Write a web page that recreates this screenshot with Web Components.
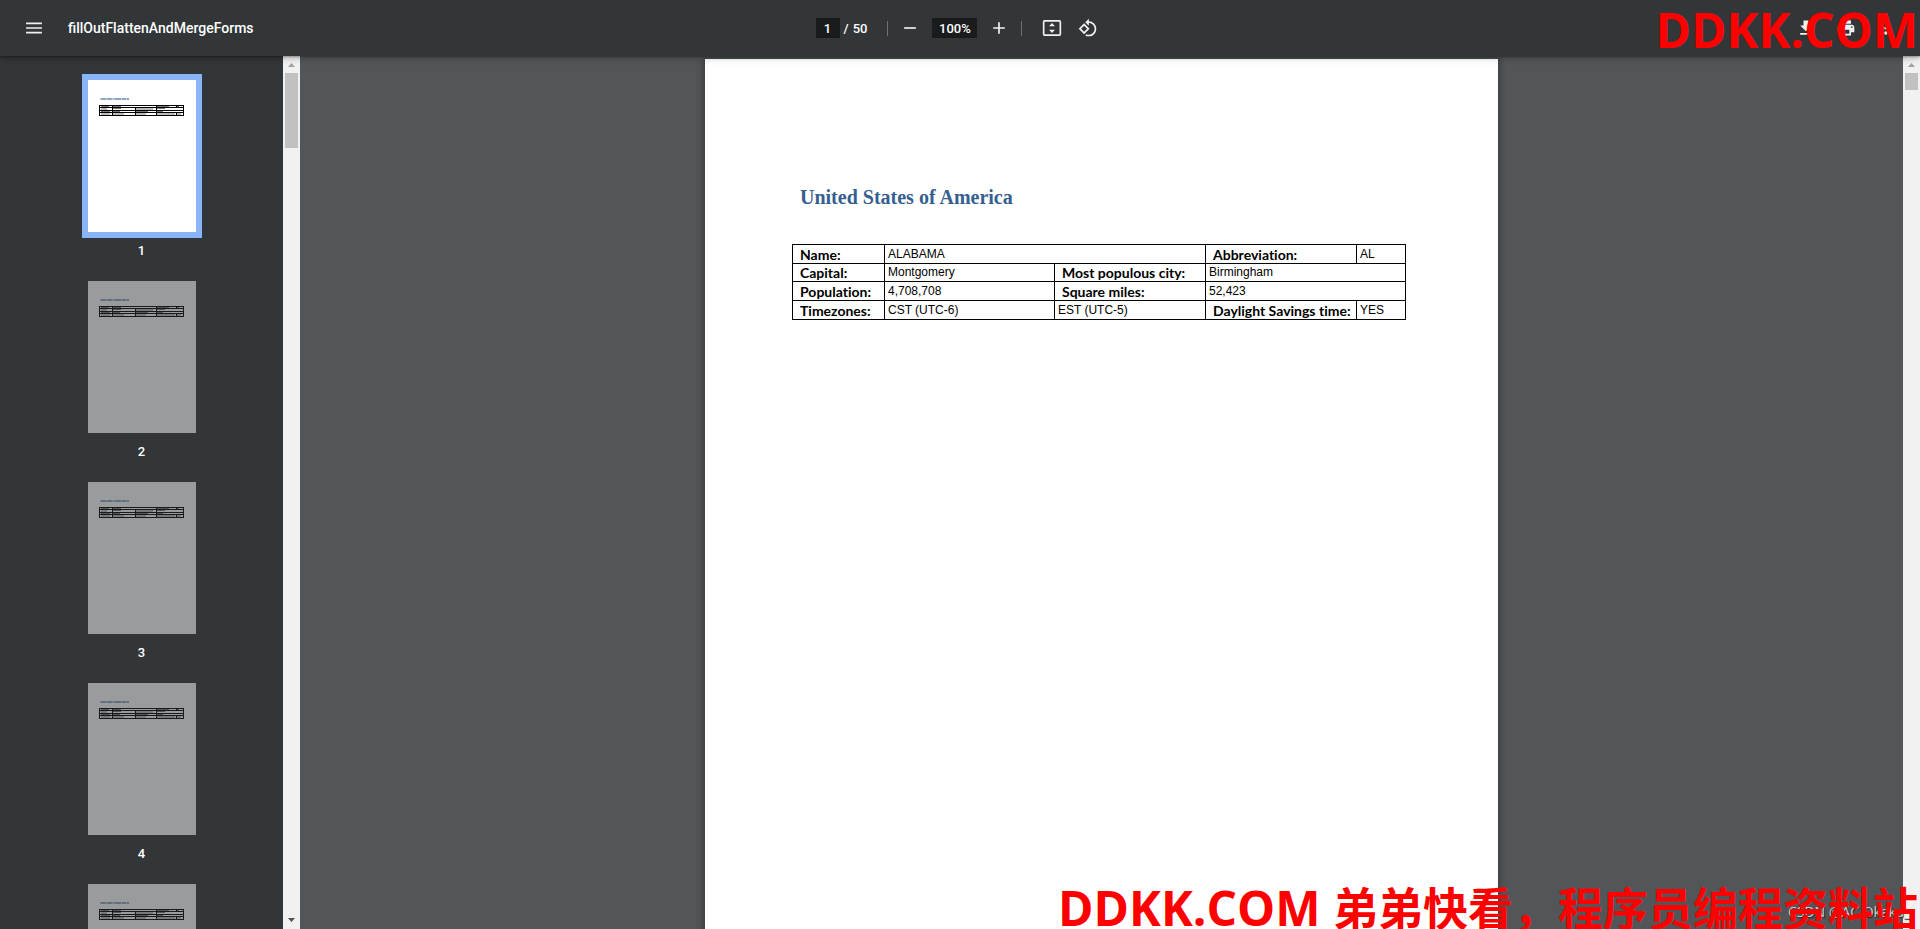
<!DOCTYPE html>
<html lang="en">
<head>
<meta charset="utf-8">
<title>fillOutFlattenAndMergeForms</title>
<style>
  html, body {
    margin: 0;
    height: 100%;
  }
  body {
    overflow: hidden;
    font-family: Roboto, "Liberation Sans", sans-serif;
  }
</style>
</head>
<body>
<pdf-viewer></pdf-viewer>

<script>
class IconButton extends HTMLElement {
  static get icons() {
    return {
      menu: `<path d="M2.500 18.500h19v-2h-19zm0-5.500h19v-2h-19zm0-7.500v2h19v-2z"/>`,
      remove: `<path d="M19 13H5v-2h14v2z"/>`,
      add: `<path d="M19 13h-6v6h-2v-6H5v-2h6V5h2v6h6v2z"/>`,
      fit: `<path fill-rule="evenodd" d="M3 2.500h18a2 2 0 0 1 2 2v15a2 2 0 0 1-2 2H3a2 2 0 0 1-2-2v-15a2 2 0 0 1 2-2zm0 2v15h18v-15H3zM12 6l3.500 4h-7zM12 18l3.500-4h-7z"/>`,
      rotate: `<path d="M7.340 6.410L.86 12.900l6.490 6.480 6.490-6.480-6.500-6.490zM3.690 12.900l3.660-3.660L11 12.900l-3.660 3.660-3.650-3.660zm15.670-6.260A8.950 8.950 0 0 0 13 4V.76L8.760 5 13 9.240V6c1.790 0 3.580.68 4.950 2.050a7.007 7.007 0 0 1 0 9.900 6.973 6.973 0 0 1-7.790 1.440l-1.490 1.490C10.020 21.620 11.510 22 13 22c2.300 0 4.610-.88 6.360-2.640a8.980 8.980 0 0 0 0-12.720z"/>`,
      download: `<path d="M19 9h-4V3H9v6H5l7 7 7-7zM5 18v2h14v-2H5z"/>`,
      print: `<path d="M19 8H5c-1.660 0-3 1.340-3 3v6h4v4h12v-4h4v-6c0-1.660-1.340-3-3-3zm-3 11H8v-5h8v5zm3-7c-.55 0-1-.45-1-1s.45-1 1-1 1 .45 1 1-.45 1-1 1zm-1-9H6v4h12V3z"/>`,
      more: `<path d="M12 8c1.100 0 2-.9 2-2s-.9-2-2-2-2 .9-2 2 .9 2 2 2zm0 2c-1.100 0-2 .9-2 2s.9 2 2 2 2-.9 2-2-.9-2-2-2zm0 6c-1.100 0-2 .9-2 2s.9 2 2 2 2-.9 2-2-.9-2-2-2z"/>`
    };
  }
  constructor() {
    super();
    this.attachShadow({mode: "open"});
  }
  connectedCallback() {
    this.shadowRoot.innerHTML = `
    <style>
      :host {
        display: block;
      }
      button {
        display: flex;
        align-items: center;
        justify-content: center;
        width: 32px;
        height: 32px;
        padding: 0;
        border: 0;
        border-radius: 50%;
        background: none;
      }
      svg {
        width: 20px;
        height: 20px;
        fill: #f1f1f1;
      }
    </style>
    <button type="button" aria-label="${this.getAttribute("label")}">
      <svg viewBox="0 0 24 24">${IconButton.icons[this.getAttribute("icon")]}</svg>
    </button>
    `;
  }
}

class ViewerToolbar extends HTMLElement {
  constructor() {
    super();
    this.attachShadow({mode: "open"});
  }
  connectedCallback() {
    this.shadowRoot.innerHTML = `
    <style>
      :host {
        display: grid;
        grid-template-columns: 1fr auto 1fr;
        align-items: center;
        box-sizing: border-box;
        height: 56px;
        padding: 0 18px;
        background: #323639;
        color: #fff;
        font-size: 13px;
        font-weight: 500;
        box-shadow: 0 -2px 8px rgba(0, 0, 0, .09), 0 4px 8px rgba(0, 0, 0, .06), 0 1px 2px rgba(0, 0, 0, .3), 0 2px 6px rgba(0, 0, 0, .15);
      }
      div {
        display: flex;
        align-items: center;
      }
      .start {
        gap: 18px;
      }
      .title {
        font-size: 14px;
        line-height: 20px;
      }
      .center, .zoom {
        gap: 6px;
      }
      .pages, .view {
        gap: 4px;
      }
      .end {
        justify-content: flex-end;
        gap: 8px;
      }
      input {
        box-sizing: border-box;
        width: 24px;
        height: 20px;
        padding: 0;
        border: 0;
        background: #191b1c;
        color: #fff;
        font: inherit;
        text-align: center;
      }
      .zoom input {
        width: 45px;
      }
      .line {
        width: 1px;
        height: 15px;
        background: #6f7274;
      }
      .pages {
        margin-right: 14px;
      }
      .view {
        margin-left: 8px;
      }
    </style>
    <div class="start">
      <icon-button icon="menu" label="Menu"></icon-button>
      <span class="title">fillOutFlattenAndMergeForms</span>
    </div>
    <div class="center">
      <div class="pages">
        <input type="text" value="1" aria-label="Page number">
        <span>/</span>
        <span>50</span>
      </div>
      <span class="line"></span>
      <div class="zoom">
        <icon-button icon="remove" label="Zoom out"></icon-button>
        <input type="text" value="100%" aria-label="Zoom level">
        <icon-button icon="add" label="Zoom in"></icon-button>
      </div>
      <span class="line"></span>
      <div class="view">
        <icon-button icon="fit" label="Fit to page"></icon-button>
        <icon-button icon="rotate" label="Rotate counterclockwise"></icon-button>
      </div>
    </div>
    <div class="end">
      <icon-button icon="download" label="Download"></icon-button>
      <icon-button icon="print" label="Print"></icon-button>
      <icon-button icon="more" label="More actions"></icon-button>
    </div>
    `;
  }
}

class ScrollTrack extends HTMLElement {
  constructor() {
    super();
    this.attachShadow({mode: "open"});
  }
  connectedCallback() {
    this.shadowRoot.innerHTML = `
    <style>
      :host {
        display: flex;
        flex-direction: column;
        flex: none;
        width: 17px;
        background: #f1f1f1;
      }
      svg {
        display: block;
        width: 17px;
        height: 17px;
      }
      .handle {
        height: var(--handle);
        margin: 0 2px;
        background: #c1c1c1;
      }
      .down {
        margin-top: auto;
      }
    </style>
    <svg viewBox="0 0 17 17"><path d="M5 11l3.500-4 3.500 4z" fill="#a3a3a3"/></svg>
    <div class="handle"></div>
    <svg class="down" viewBox="0 0 17 17"><path d="M5 6l3.500 4L12 6z" fill="#505050"/></svg>
    `;
  }
}

class PageThumb extends HTMLElement {
  constructor() {
    super();
    this.attachShadow({mode: "open"});
  }
  connectedCallback() {
    this.shadowRoot.innerHTML = `
    <style>
      :host {
        display: flex;
        flex-direction: column;
        align-items: center;
        flex: none;
        height: 201px;
        color: #fff;
        font-size: 13px;
        font-weight: 500;
        line-height: 16px;
      }
      .sheet {
        margin-bottom: 11px;
        background: #fff;
        opacity: .5;
      }
      :host([active]) .sheet {
        opacity: 1;
        box-shadow: 0 0 0 6px #8ab4f8;
      }
      svg {
        display: block;
        width: 108px;
        height: 152px;
      }
    </style>
    <div class="sheet">
      <svg viewBox="0 0 108 152">
        <path d="M12.500 19h29" stroke="#8ea6c4" stroke-width="2" stroke-dasharray="6 .5 5 .5 2 .5"/>
        <path d="M13 26.500h8M25 26.500h8M69 26.500h12M89 26.500h2M13 29h6M25 28.500h8M48 29h17M69 28.500h8M13 31.500h9M25 31.500h7M48 31.500h12M69 31.500h6M13 34h9M25 34h11M48 34h10M69 34h18M89 34h4" stroke="#777" stroke-width="1"/>
        <path d="M11 25.500h85M11 27.500h85M11 30.500h85M11 32.500h85M11 35.500h85M11.500 25v11M24.500 25v11M47.500 27v9M68.500 25v11M88.500 25v3M88.500 32v4M95.500 25v11" stroke="#000" stroke-width="1"/>
      </svg>
    </div>
    <slot></slot>
    `;
  }
}

class StateForm extends HTMLElement {
  constructor() {
    super();
    this.attachShadow({mode: "open"});
  }
  connectedCallback() {
    this.shadowRoot.innerHTML = `
    <style>
      :host {
        display: block;
        box-sizing: border-box;
        width: 793px;
        min-height: 1123px;
        padding: 126px 87px;
        background: #fff;
        box-shadow: 0 2px 6px 2px rgba(0, 0, 0, .3);
      }
      h1 {
        margin: 0 0 35px 8px;
        color: #365f91;
        font: bold 20px/24px "Liberation Serif", serif;
      }
      table {
        width: 614px;
        border-collapse: collapse;
        table-layout: fixed;
        color: #000;
      }
      th, td {
        height: 18px;
        padding: 0;
        border: 1px solid #000;
        line-height: 17px;
        text-align: left;
        white-space: nowrap;
      }
      tr:nth-child(2) > * {
        height: 17px;
      }
      th {
        padding-left: 7px;
        font-family: Lato, sans-serif;
        font-size: 14px;
        font-weight: bold;
        font-variant-ligatures: none;
      }
      td {
        padding-left: 3px;
        font-family: "Liberation Sans", sans-serif;
        font-size: 12px;
      }
    </style>
    <h1>United States of America</h1>
    <table>
      <colgroup>
        <col style="width: 92px">
        <col style="width: 170px">
        <col style="width: 151px">
        <col style="width: 151px">
        <col style="width: 49px">
      </colgroup>
      <tr><th>Name:</th><td colspan="2">ALABAMA</td><th>Abbreviation:</th><td>AL</td></tr>
      <tr><th>Capital:</th><td>Montgomery</td><th>Most populous city:</th><td colspan="2">Birmingham</td></tr>
      <tr><th>Population:</th><td>4,708,708</td><th>Square miles:</th><td colspan="2">52,423</td></tr>
      <tr><th>Timezones:</th><td>CST (UTC-6)</td><td>EST (UTC-5)</td><th>Daylight Savings time:</th><td>YES</td></tr>
    </table>
    `;
  }
}

class SiteMark extends HTMLElement {
  constructor() {
    super();
    this.attachShadow({mode: "open"});
  }
  connectedCallback() {
    this.shadowRoot.innerHTML = `
    <style>
      :host {
        display: block;
        color: #f00;
        font: bold 48px/60px "Open Sans", "Noto Sans", sans-serif;
        white-space: nowrap;
      }
      ::slotted(span) {
        font-family: "Noto Sans CJK SC", sans-serif;
        font-size: 45px;
      }
    </style>
    <slot></slot>
    `;
  }
}

class PdfViewer extends HTMLElement {
  constructor() {
    super();
    this.attachShadow({mode: "open"});
  }
  connectedCallback() {
    this.shadowRoot.innerHTML = `
    <style>
      :host {
        display: flex;
        flex-direction: column;
        position: relative;
        height: 100vh;
        overflow: hidden;
        background: #525659;
      }
      viewer-toolbar {
        position: relative;
        z-index: 1;
        flex: none;
      }
      .body {
        display: flex;
        flex: 1;
        min-height: 0;
      }
      nav {
        flex: none;
        box-sizing: border-box;
        width: 283px;
        padding-top: 24px;
        overflow: hidden;
        background: #323639;
      }
      main {
        display: flex;
        flex: 1;
        justify-content: center;
        align-items: flex-start;
        padding-top: 3px;
        overflow: hidden;
      }
      .side {
        --handle: 75px;
      }
      .doc {
        --handle: 17px;
      }
      .top, .bottom, .credit {
        position: absolute;
        z-index: 2;
      }
      .top {
        top: 0;
        right: 2px;
      }
      .bottom {
        right: 2px;
        bottom: -9px;
      }
      .credit {
        right: 10px;
        bottom: 7px;
        color: #d0d0d0;
        font: 14px/20px "Open Sans", "Noto Sans", sans-serif;
        text-shadow: 1px 1px 1px #222;
      }
    </style>
    <viewer-toolbar></viewer-toolbar>
    <div class="body">
      <nav>
        <page-thumb active>1</page-thumb>
        <page-thumb>2</page-thumb>
        <page-thumb>3</page-thumb>
        <page-thumb>4</page-thumb>
        <page-thumb></page-thumb>
      </nav>
      <scroll-track class="side"></scroll-track>
      <main><state-form></state-form></main>
      <scroll-track class="doc"></scroll-track>
    </div>
    <div class="credit">CSDN @AC.Okaka_</div>
    <site-mark class="top">DDKK.COM</site-mark>
    <site-mark class="bottom">DDKK.COM <span>弟弟快看，程序员编程资料站</span></site-mark>
    `;
  }
}

window.customElements.define("icon-button", IconButton);
window.customElements.define("viewer-toolbar", ViewerToolbar);
window.customElements.define("scroll-track", ScrollTrack);
window.customElements.define("page-thumb", PageThumb);
window.customElements.define("state-form", StateForm);
window.customElements.define("site-mark", SiteMark);
window.customElements.define("pdf-viewer", PdfViewer);
</script>
</body>
</html>
